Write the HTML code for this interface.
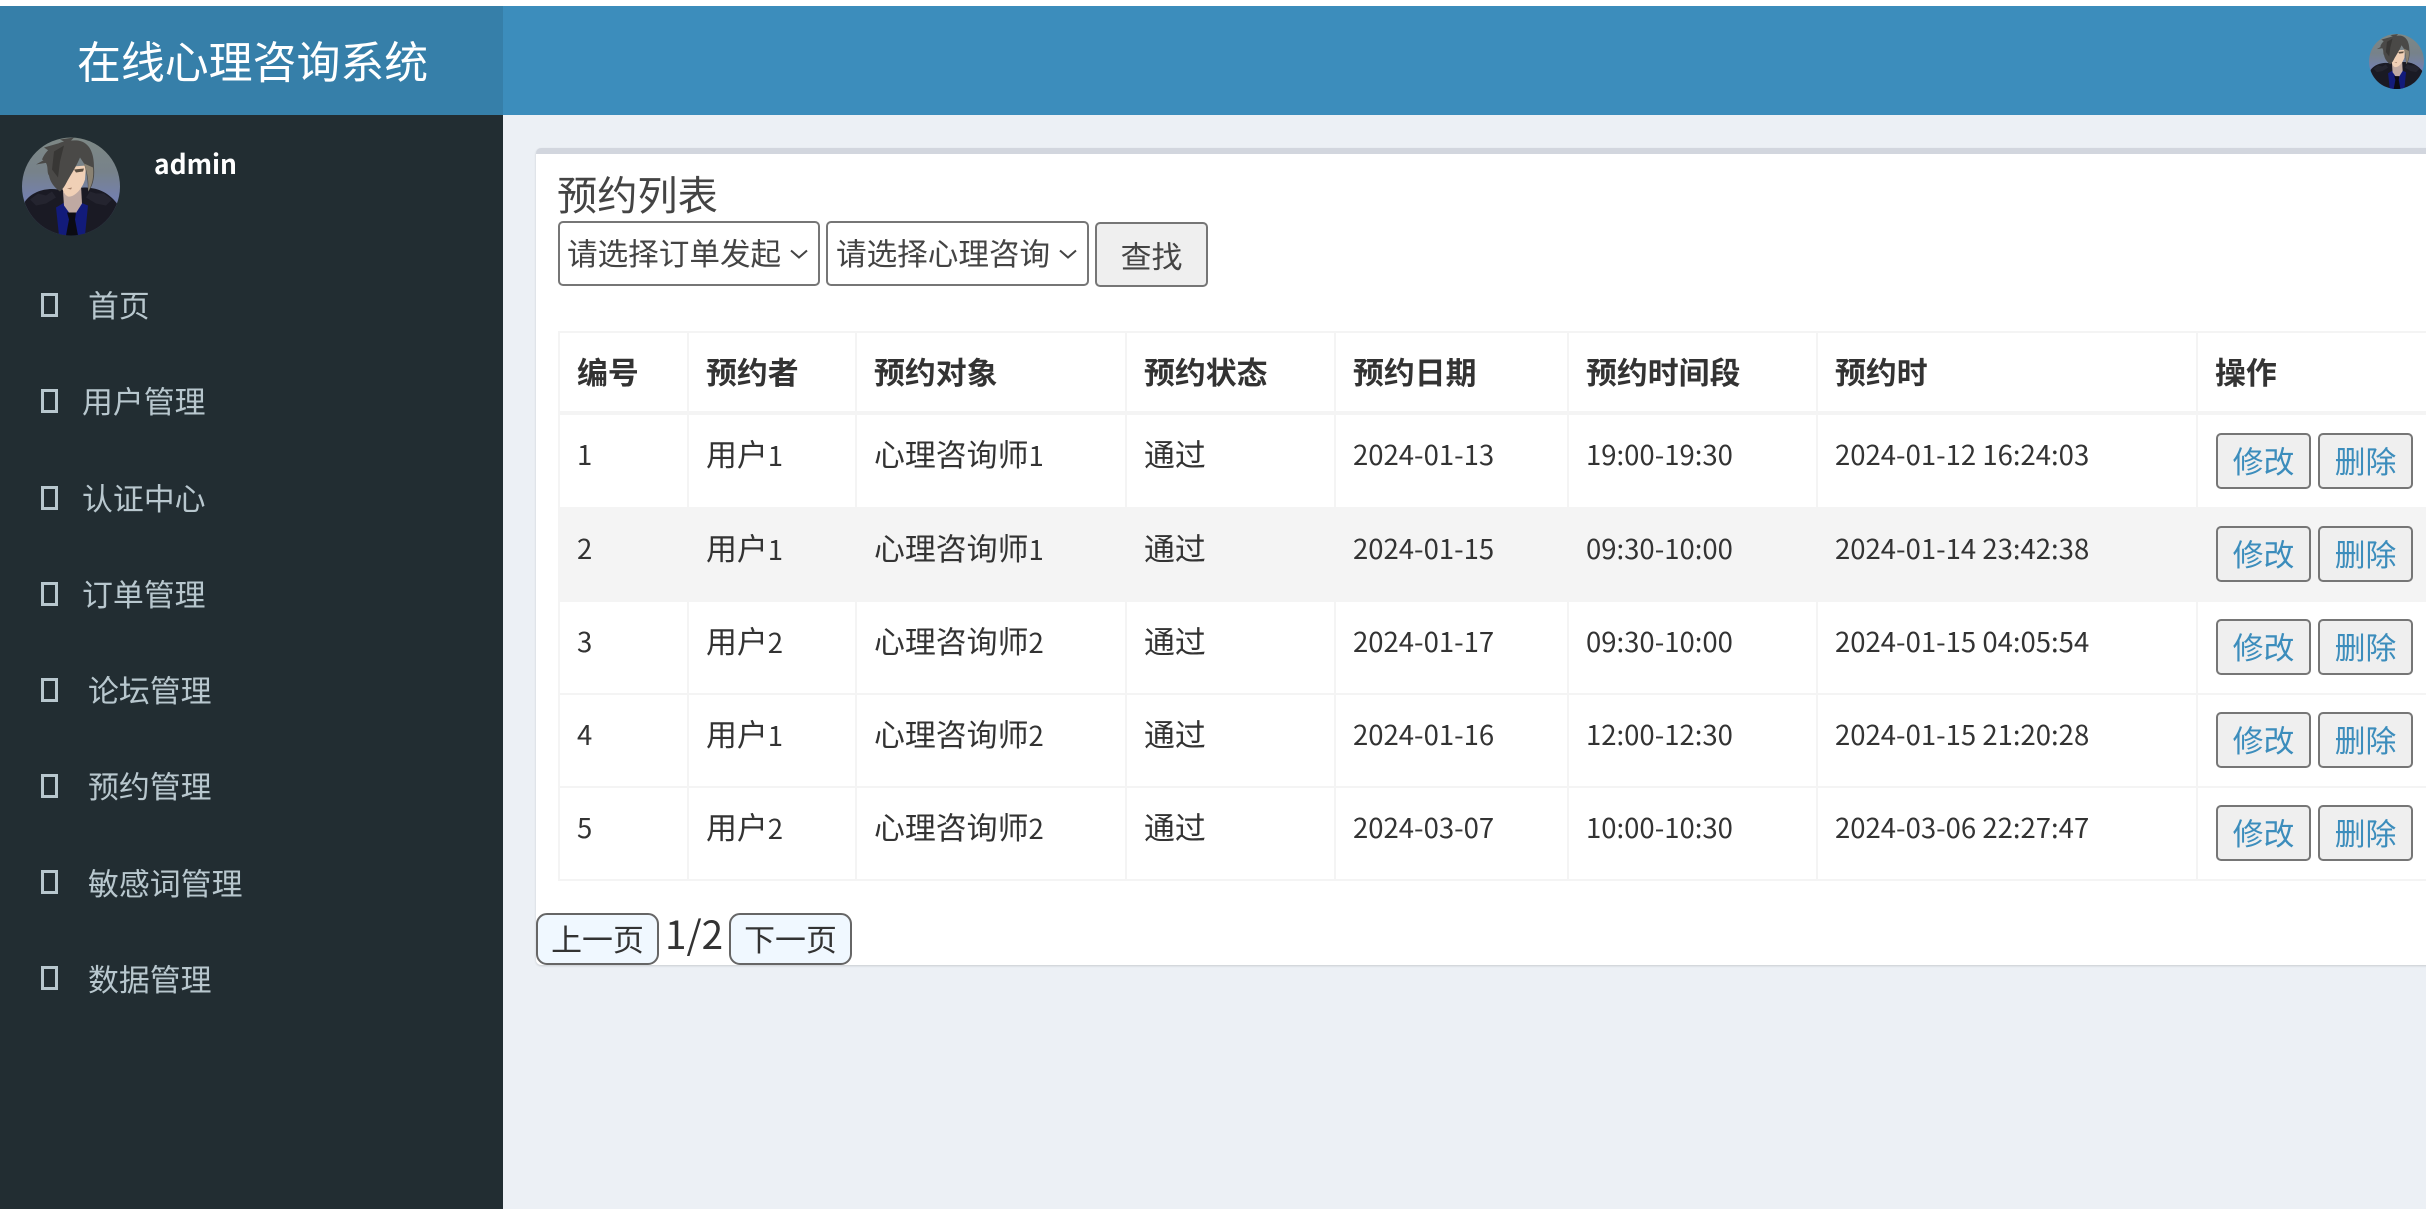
<!DOCTYPE html>
<html lang="zh-CN">
<head>
<meta charset="utf-8">
<title>在线心理咨询系统</title>
<style>
*{box-sizing:border-box}
html,body{margin:0;padding:0;width:2426px;height:1209px;overflow:hidden;background:#fff}
body{position:relative;font-family:"Noto Sans CJK SC","Liberation Sans",sans-serif;color:#333}
.abs{position:absolute}
#main{left:0;top:115px;width:2426px;height:1094px;background:#ecf0f5}
#nav{left:503px;top:6px;width:1923px;height:109px;background:#3c8dbc}
#logo{left:0;top:6px;width:503px;height:109px;background:#367fa9;color:#fff;font-size:43.9px;line-height:107px;padding-left:77px;white-space:nowrap}
#side{left:0;top:115px;width:503px;height:1094px;background:#222d32}
#uname{left:154px;top:143px;color:#fff;font-weight:700;font-size:26.4px;line-height:40px}
.mi{position:absolute;color:#b8c7ce;font-size:30.9px;line-height:44px;white-space:nowrap;height:44px}
.tofu{position:absolute;left:41px;width:17px;height:24px;border:3px solid #b8c7ce}
#card{left:536px;top:148px;width:1960px;height:817px;background:#fff;border-top:6px solid #d2d6de;border-radius:5px;box-shadow:0 1px 2px rgba(0,0,0,.15)}
#ttl{left:557px;top:168px;font-size:40.2px;line-height:50px;color:#444;white-space:nowrap}
select{position:absolute;top:221px;height:65px;-webkit-appearance:none;appearance:none;background:#fff;border:2px solid #767676;border-radius:5px;font:30.6px "Noto Sans CJK SC","Liberation Sans",sans-serif;color:#444;padding:0 0 3px 7px;margin:0}
.chev{position:absolute;top:248px}
button{font:30.9px "Noto Sans CJK SC","Liberation Sans",sans-serif;margin:0;padding:0;background:#efefef;border:2.5px solid #767676;border-radius:5px;cursor:pointer}
#find{left:1095px;top:222px;width:113px;height:65px;color:#444}
#tbl{position:absolute;left:558px;top:331px;width:2000px;border-collapse:separate;border-spacing:0;table-layout:fixed;border-left:2px solid #f4f4f4;border-top:2px solid #f4f4f4;font-size:30.9px;color:#333}
#tbl th,#tbl td{padding:16px 0 0 17px;vertical-align:top;text-align:left;line-height:44px;border-right:2px solid #f4f4f4;border-bottom:2px solid #f4f4f4;white-space:nowrap;font-weight:400;overflow:hidden}
#tbl th{font-weight:700;height:82px;border-bottom-width:4px}
#tbl tr.r1 td{height:94px}
#tbl tr.r td{height:93px}
#tbl tr.s td{background:#f4f4f4}
#tbl .n,#tbl b{font-size:27.5px;font-weight:400}
#tbl td.op{padding:17px 0 0 18px}
#tbl tr.r1 td.op{padding-top:18px}
.op button{display:inline-block;vertical-align:top;width:95px;height:56px;color:#3c8dbc;line-height:47px;padding-bottom:3px}
.op button+button{margin-left:7px}
.pg{position:absolute;top:913px;width:123px;height:52px;background:#f0f8ff;border:2.5px solid #666;border-radius:11px;color:#333;line-height:44px;padding-bottom:2px}
#pn{left:665px;top:905px;font-size:38.7px;line-height:56px;color:#333}
</style>
</head>
<body>
<svg width="0" height="0" style="position:absolute">
  <defs>
    <linearGradient id="g" x1="0" y1="0" x2="0" y2="1">
      <stop offset="0" stop-color="#7e8885"/>
      <stop offset=".35" stop-color="#77828a"/>
      <stop offset=".62" stop-color="#7480ad"/>
      <stop offset="1" stop-color="#5a5f8a"/>
    </linearGradient>
    <clipPath id="c"><circle cx="49" cy="49" r="49"/></clipPath>
    <symbol id="ava" viewBox="0 0 98 98">
      <g clip-path="url(#c)">
        <rect width="98" height="98" fill="url(#g)"/>
        <path d="M3 64C10 54 24 50 36 52L62 50C74 50 86 54 95 66L98 98H0Z" fill="#1a1a24"/>
        <path d="M8 62L16 56 24 58 30 54 34 60 24 66 14 68ZM90 62L82 56 74 56 68 54 64 60 74 66 84 68Z" fill="#24242f"/>
        <path d="M34 70L44 64 56 64 66 68 63 98H37Z" fill="#121b7a"/>
        <path d="M41 54L59 48 60 66 53 77 47 75 42 68Z" fill="#bfa9a2"/>
        <path d="M45 75L54 75 53 82 56 98H44L47 82Z" fill="#0b0b13"/>
        <path d="M38 30L64 28 63 42C60 52 52 60 46 59 41 57 38 48 38 30Z" fill="#f0d0b6"/>
        <path d="M52 32L62 31 61 34 54 35Z" fill="#5a4d3f"/>
        <path d="M45 51L50 50 49 52Z" fill="#a5806a"/>
        <path d="M20 22C26 8 40 2 56 3 68 5 72 16 72 30 73 42 70 50 66 54 66 44 65 36 62 26L58 20C54 30 48 38 44 46 42 50 40 52 38 54 32 50 28 44 27 38 24 34 28 26 20 22Z" fill="#4a4947"/>
        <path d="M14 27L28 19 26 25ZM22 10L36 6 28 14ZM38 2L52 0 46 6Z" fill="#4a4947"/>
        <path d="M62 26C66 36 67 46 66 54 70 48 72 40 71 30Z" fill="#8a8272"/>
        <path d="M32 14L42 8 38 24 36 40 30 32Z" fill="#383735"/>
      </g>
    </symbol>
  </defs>
</svg>

<div class="abs" id="main"></div>
<div class="abs" id="nav"></div>
<div class="abs" id="logo">在线心理咨询系统</div>
<svg class="abs" style="left:2369px;top:34px" width="55" height="55"><use href="#ava" width="55" height="55"/></svg>

<div class="abs" id="side"></div>
<svg class="abs" style="left:22px;top:137px" width="98" height="99"><use href="#ava" width="98" height="99"/></svg>
<div class="abs" id="uname">admin</div>

<i class="tofu" style="top:293px"></i><div class="mi" style="left:88px;top:282px">首页</div>
<i class="tofu" style="top:389px"></i><div class="mi" style="left:82px;top:378px">用户管理</div>
<i class="tofu" style="top:486px"></i><div class="mi" style="left:82px;top:475px">认证中心</div>
<i class="tofu" style="top:582px"></i><div class="mi" style="left:82px;top:571px">订单管理</div>
<i class="tofu" style="top:678px"></i><div class="mi" style="left:88px;top:667px">论坛管理</div>
<i class="tofu" style="top:774px"></i><div class="mi" style="left:88px;top:763px">预约管理</div>
<i class="tofu" style="top:870px"></i><div class="mi" style="left:88px;top:860px">敏感词管理</div>
<i class="tofu" style="top:966px"></i><div class="mi" style="left:88px;top:956px">数据管理</div>

<div class="abs" id="card"></div>
<div class="abs" id="ttl">预约列表</div>
<select style="left:558px;width:262px"><option>请选择订单发起</option></select>
<svg class="chev" style="left:789px" width="20" height="12" viewBox="0 0 20 12"><path d="M2 2.5L10 9.5 18 2.5" fill="none" stroke="#444" stroke-width="2"/></svg>
<select style="left:826px;width:263px;padding-left:8px"><option>请选择心理咨询</option></select>
<svg class="chev" style="left:1058px" width="20" height="12" viewBox="0 0 20 12"><path d="M2 2.5L10 9.5 18 2.5" fill="none" stroke="#444" stroke-width="2"/></svg>
<button class="abs" id="find">查找</button>

<table id="tbl">
  <colgroup><col style="width:129px"><col style="width:168px"><col style="width:270px"><col style="width:209px"><col style="width:233px"><col style="width:249px"><col style="width:380px"><col style="width:360px"></colgroup>
  <tr><th>编号</th><th>预约者</th><th>预约对象</th><th>预约状态</th><th>预约日期</th><th>预约时间段</th><th>预约时</th><th>操作</th></tr>
  <tr class="r1"><td class="n">1</td><td>用户<b>1</b></td><td>心理咨询师<b>1</b></td><td>通过</td><td class="n">2024-01-13</td><td class="n">19:00-19:30</td><td class="n">2024-01-12 16:24:03</td><td class="op"><button>修改</button><button>删除</button></td></tr>
  <tr class="r s"><td class="n">2</td><td>用户<b>1</b></td><td>心理咨询师<b>1</b></td><td>通过</td><td class="n">2024-01-15</td><td class="n">09:30-10:00</td><td class="n">2024-01-14 23:42:38</td><td class="op"><button>修改</button><button>删除</button></td></tr>
  <tr class="r"><td class="n">3</td><td>用户<b>2</b></td><td>心理咨询师<b>2</b></td><td>通过</td><td class="n">2024-01-17</td><td class="n">09:30-10:00</td><td class="n">2024-01-15 04:05:54</td><td class="op"><button>修改</button><button>删除</button></td></tr>
  <tr class="r"><td class="n">4</td><td>用户<b>1</b></td><td>心理咨询师<b>2</b></td><td>通过</td><td class="n">2024-01-16</td><td class="n">12:00-12:30</td><td class="n">2024-01-15 21:20:28</td><td class="op"><button>修改</button><button>删除</button></td></tr>
  <tr class="r"><td class="n">5</td><td>用户<b>2</b></td><td>心理咨询师<b>2</b></td><td>通过</td><td class="n">2024-03-07</td><td class="n">10:00-10:30</td><td class="n">2024-03-06 22:27:47</td><td class="op"><button>修改</button><button>删除</button></td></tr>
</table>

<button class="pg" style="left:536px">上一页</button>
<div class="abs" id="pn">1/2</div>
<button class="pg" style="left:729px">下一页</button>
</body>
</html>
